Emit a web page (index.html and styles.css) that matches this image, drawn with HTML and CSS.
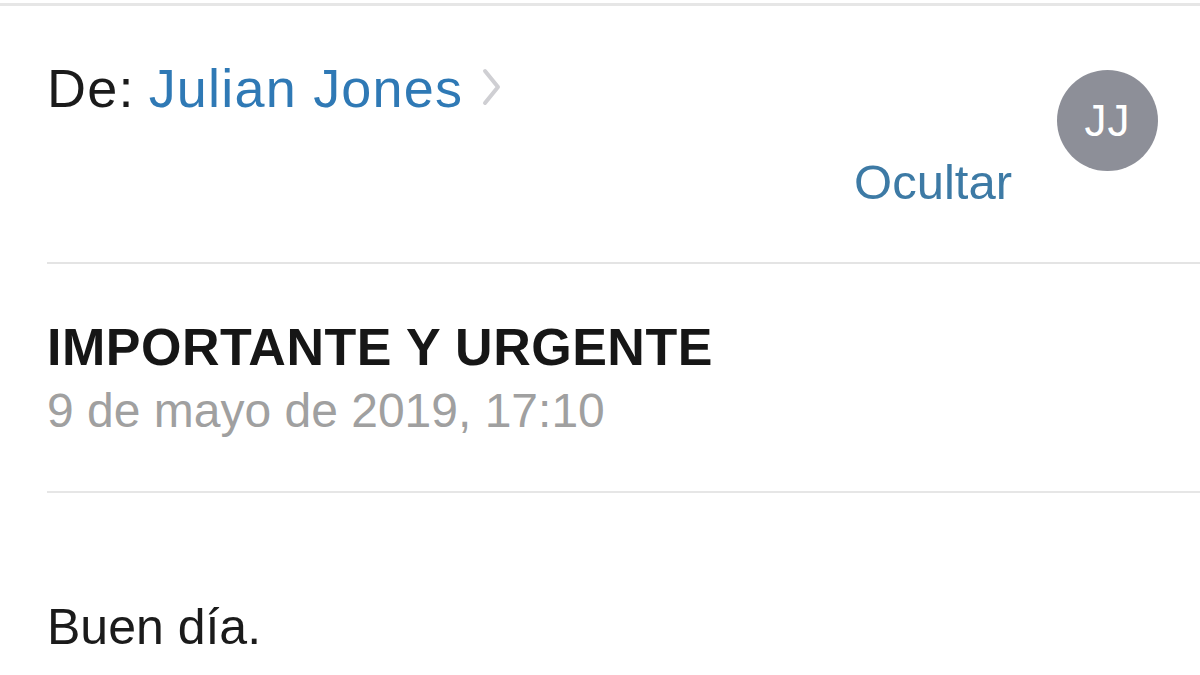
FILE: index.html
```html
<!DOCTYPE html>
<html lang="es">
<head>
<meta charset="utf-8">
<title>Correo</title>
<link rel="stylesheet" href="styles.css">
</head>
<body>
<div class="topline"></div>
<main class="mail">
  <section class="header">
    <div class="header-main">
      <div class="from">
        <span class="from-label">De:</span>
        <span class="from-name">Julian Jones</span>
        <svg class="chevron" width="20" height="38" viewBox="0 0 20 38" aria-hidden="true">
          <polyline points="3,3 16,19 3,35" fill="none" stroke="#cfcfd3" stroke-width="4" stroke-linecap="round" stroke-linejoin="round"/>
        </svg>
      </div>
      <div class="hide-row"><span class="hide">Ocultar</span></div>
    </div>
    <div class="avatar">JJ</div>
  </section>
  <section class="subject">
    <div class="title">IMPORTANTE Y URGENTE</div>
    <div class="date">9 de mayo de 2019, 17:10</div>
  </section>
  <section class="body">
    <p class="text">Buen día.</p>
  </section>
</main>
</body>
</html>
```
FILE: styles.css
```css
html, body {
  margin: 0;
  padding: 0;
  background: #ffffff;
}
body {
  font-family: "Liberation Sans", Arial, sans-serif;
  color: #1b1b1b;
  width: 1200px;
  height: 675px;
  overflow: hidden;
}
.topline {
  margin-top: 3px;
  height: 3px;
  background: #e6e6e6;
}
.mail {
  padding-left: 47px;
}
.header {
  display: flex;
  align-items: flex-start;
  padding: 50px 42px 52px 0;
  border-bottom: 2px solid #e4e4e4;
}
.header-main {
  flex: 1;
  display: flex;
  flex-direction: column;
}
.from {
  display: flex;
  align-items: center;
  font-size: 54px;
  line-height: 64px;
  letter-spacing: 1.2px;
}
.from-label {
  color: #1b1b1b;
  margin-right: 14px;
}
.from-name {
  color: #2f79b5;
}
.chevron {
  margin-left: 19px;
  margin-top: -2px;
}
.hide-row {
  display: flex;
  justify-content: flex-end;
  margin-top: 34px;
  margin-right: 45px;
}
.hide {
  font-size: 49px;
  line-height: 56px;
  color: #3d7aa5;
}
.avatar {
  width: 101px;
  height: 101px;
  margin-top: 14px;
  border-radius: 50%;
  background: #8d8f98;
  color: #ffffff;
  display: flex;
  align-items: center;
  justify-content: center;
  font-size: 44px;
  letter-spacing: 1px;
}
.subject {
  padding: 53px 0 52px 0;
  border-bottom: 2px solid #e6e6e6;
}
.title {
  font-size: 52px;
  line-height: 60px;
  font-weight: bold;
  letter-spacing: 0.5px;
  color: #161616;
}
.date {
  margin-top: 6px;
  font-size: 48px;
  line-height: 56px;
  color: #a0a0a0;
}
.body {
  padding-top: 105px;
}
.text {
  margin: 0;
  font-size: 50px;
  line-height: 58px;
  color: #1b1b1b;
}
```
